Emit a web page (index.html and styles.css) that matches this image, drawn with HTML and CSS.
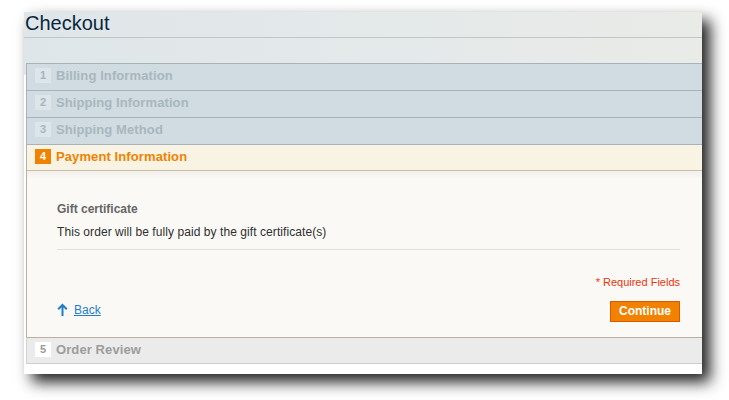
FILE: index.html
```html
<!DOCTYPE html>
<html lang="en">
<head>
<meta charset="utf-8">
<title>Checkout</title>
<link rel="stylesheet" href="styles.css">
</head>
<body>
<div class="window">
  <div class="page-title">
    <h1>Checkout</h1>
  </div>
  <ol class="opc">
    <li class="section allow">
      <div class="step-title"><span class="number">1</span><h2>Billing Information</h2></div>
    </li>
    <li class="section allow">
      <div class="step-title"><span class="number">2</span><h2>Shipping Information</h2></div>
    </li>
    <li class="section allow">
      <div class="step-title"><span class="number">3</span><h2>Shipping Method</h2></div>
    </li>
    <li class="section active">
      <div class="step-title"><span class="number">4</span><h2>Payment Information</h2></div>
      <div class="step">
        <p class="label">Gift certificate</p>
        <p class="note">This order will be fully paid by the gift certificate(s)</p>
        <div class="divider"></div>
        <p class="required">* Required Fields</p>
        <div class="buttons-set">
          <p class="back-link">
            <svg class="back-arrow" width="11" height="13" viewBox="0 0 11 13" aria-hidden="true">
              <path d="M5.5 2.2 V13 M1.2 6.3 L5.5 2 L9.8 6.3" fill="none" stroke="#1e7ec8" stroke-width="2"/>
            </svg>
            <a href="#">Back</a>
          </p>
          <button class="button" type="button">Continue</button>
        </div>
      </div>
    </li>
    <li class="section last">
      <div class="step-title"><span class="number">5</span><h2>Order Review</h2></div>
    </li>
  </ol>
</div>
</body>
</html>
```
FILE: styles.css
```css
html, body {
  margin: 0;
  padding: 0;
  background: #ffffff;
}

body {
  font: 12px/15px "Liberation Sans", Arial, Helvetica, sans-serif;
  color: #2f2f2f;
  padding-bottom: 26px;
}

.window {
  margin: 12px 0 0 24px;
  width: 678px;
  height: 362px;
  overflow: hidden;
  background: linear-gradient(to bottom, rgba(255,255,255,0) 0, rgba(255,255,255,0) 63px, #ffffff 63px) ,
              linear-gradient(to right, #dfe6e9 0%, #e4e9ea 50%, #e9ebe7 100%);
  box-shadow: 8px 8px 14px rgba(0, 0, 0, 0.88);
}

.page-title {
  box-sizing: border-box;
  height: 26px;
  padding: 1px 0 0 1px;
  border-bottom: 1px solid #c2c6c6;
}

.page-title h1 {
  margin: 0;
  font-size: 20px;
  line-height: 20px;
  font-weight: normal;
  color: #0a263c;
}

/* one page checkout accordion */
.opc {
  list-style: none;
  margin: 25px 0 0 2px;
  padding: 0;
  width: 684px;
  box-sizing: border-box;
}

.step-title {
  display: flex;
  align-items: flex-start;
  height: 16px;
  padding: 4px 8px 6px;
  border-top: 1px solid #bbafa0;
  background: #eeeeee;
}

.step-title .number {
  box-sizing: border-box;
  width: 16px;
  height: 15px;
  margin-right: 5px;
  border: 1px solid #ffffff;
  background: #ffffff;
  font: bold 11px/13px "Liberation Sans", Arial, sans-serif;
  text-align: center;
  color: #999999;
}

.step-title h2 {
  margin: 0;
  font: bold 13px/16px "Liberation Sans", Arial, sans-serif;
  letter-spacing: 0.1px;
  color: #999999;
}

.allow .step-title {
  background: #d0dce1;
  border: 1px solid #a8b3b9;
  border-bottom: 0;
}

.allow .step-title .number {
  background: #dbe5ea;
  border-color: #dbe5ea;
  color: #a6b4bc;
}

.allow .step-title h2 {
  color: #a8b6be;
}

.active .step-title {
  height: 15px;
  background: #f9f3e3;
  border-left: 1px solid #bbafa0;
  border-top: 1px solid #a8b3b9;
  border-bottom: 1px solid #c9bda8;
}

.active .step-title .number {
  background: #f18200;
  border-color: #f18200;
  color: #ffffff;
}

.active .step-title h2 {
  color: #f18200;
}

.step {
  box-sizing: border-box;
  height: 166px;
  padding: 31px 30px 0;
  border-left: 1px solid #bbafa0;
  background: linear-gradient(to bottom, #f2f0ec 0, #faf9f6 8px, #faf9f6 100%);
}

.step p {
  margin: 0;
}

.step .label {
  font-weight: bold;
  color: #666666;
}

.step .note {
  margin-top: 8px;
  letter-spacing: 0.07px;
}

.divider {
  margin-top: 9px;
  border-bottom: 1px solid #e3dfd9;
}

.required {
  margin-top: 25px !important;
  font-size: 11px;
  text-align: right;
  color: #eb340a;
}

.buttons-set {
  display: flex;
  justify-content: space-between;
  align-items: flex-start;
  margin-top: 11px;
}

.back-link {
  display: flex;
  align-items: center;
  gap: 6px;
  padding-top: 2px;
}

.back-link a {
  color: #1e7ec8;
  text-decoration: underline;
}

.back-arrow {
  display: block;
  margin-top: -2px;
}

.button {
  margin: 0;
  height: 21px;
  padding: 0 8px;
  border: 1px solid #de5400;
  background: #f18200;
  font: bold 12px/19px "Liberation Sans", Arial, sans-serif;
  color: #ffffff;
  cursor: pointer;
}

.last .step-title {
  height: 15px;
  background: #ebebeb;
  border-left: 1px solid #d2d2d2;
  border-bottom: 1px solid #cdcdcd;
}

.last .step-title .number {
  color: #9a9a9a;
}

.last .step-title h2 {
  color: #9c9c9c;
}
```
